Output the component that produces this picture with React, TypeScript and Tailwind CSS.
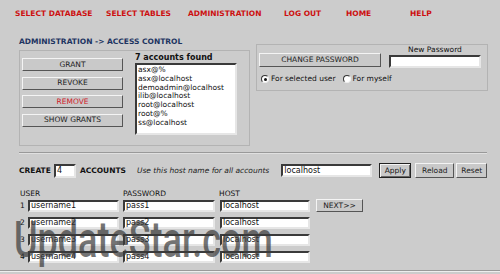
import React, { FC } from 'react';

const navItems = [
  { label: 'SELECT DATABASE', width: 'w-[91px]' },
  { label: 'SELECT TABLES', width: 'w-[82px]' },
  { label: 'ADMINISTRATION', width: 'w-[96px]' },
  { label: 'LOG OUT', width: 'w-[62px]' },
  { label: 'HOME', width: 'w-[64px]' },
  { label: 'HELP', width: 'w-[60px]' },
];

const accounts = [
  'asx@%',
  'asx@localhost',
  'demoadmin@localhost',
  'ilib@localhost',
  'root@localhost',
  'root@%',
  'ss@localhost',
];

const newAccounts = [
  { user: 'username1', pass: 'pass1', host: 'localhost' },
  { user: 'username2', pass: 'pass2', host: 'localhost' },
  { user: 'username3', pass: 'pass3', host: 'localhost' },
  { user: 'username4', pass: 'pass4', host: 'localhost' },
];

// old-school raised / sunken borders
const raised = 'border border-t-[#f4f4f4] border-l-[#f4f4f4] border-r-[#555] border-b-[#555] bg-[#c9c9c9]';
const sunken = 'border-2 border-t-[#3a3a3a] border-l-[#3a3a3a] border-r-[#e6e6e6] border-b-[#e6e6e6] bg-white';

const Button: FC<{ label: string; className?: string; red?: boolean }> = ({ label, className = '', red }) => (
  <div
    className={`${raised} flex items-center justify-center text-[7.5px] leading-none ${
      red ? 'text-[#d0202a]' : 'text-[#222]'
    } ${className}`}
  >
    {label}
  </div>
);

const Field: FC<{ value?: string; className?: string }> = ({ value = '', className = '' }) => (
  <div className={`${sunken} flex items-center pl-[1px] text-[8px] leading-none text-[#111] ${className}`}>{value}</div>
);

const Radio: FC<{ checked?: boolean }> = ({ checked }) => (
  <span className="flex h-[8px] w-[8px] items-center justify-center rounded-full border border-t-[#333] border-l-[#333] border-r-[#eee] border-b-[#eee] bg-white">
    {checked && <span className="h-[3px] w-[3px] rounded-full bg-[#111]" />}
  </span>
);

const App: FC = () => {
  return (
    <div
      className="relative h-[274px] w-[500px] overflow-hidden bg-[#cccccc] text-[#222]"
      style={{ fontFamily: '"DejaVu Sans", Verdana, sans-serif' }}
    >
      {/* top menu */}
      <div className="flex pl-[15px] pt-[9px] text-[7.5px] font-bold leading-[9px] text-[#cc1010]">
        {navItems.map((item) => (
          <div key={item.label} className={item.width}>
            {item.label}
          </div>
        ))}
      </div>

      <div className="ml-[19px] mt-[19px] text-[7.5px] font-bold leading-[9px] text-[#1d3461]">
        ADMINISTRATION -&gt; ACCESS CONTROL
      </div>

      {/* access control panels */}
      <div className="mt-[-2px] flex items-start gap-[6px] pl-[19px]">
        <div className="mt-[6px] flex h-[96px] w-[231px] border border-[#b3b3b3] pl-[2px] pt-[7px]">
          <div className="flex w-[101px] flex-col gap-[5.5px]">
            <Button label="GRANT" className="h-[13px]" />
            <Button label="REVOKE" className="h-[13px]" />
            <Button label="REMOVE" className="h-[13px]" red />
            <Button label="SHOW GRANTS" className="h-[13px]" />
          </div>
          <div className="ml-[12px] mt-[-5px] flex flex-col">
            <div className="text-[8px] font-bold leading-[9px] text-[#111]">7 accounts found</div>
            <div className="mt-[1px] h-[72px] w-[102px] border-2 border-t-[#3a3a3a] border-l-[#3a3a3a] border-r-[#e6e6e6] border-b-[#e6e6e6] bg-white pl-[1px] pt-[1px]">
              {accounts.map((a) => (
                <div key={a} className="text-[7.5px] leading-[8.8px] text-[#111]">
                  {a}
                </div>
              ))}
            </div>
          </div>
        </div>

        <div className="flex h-[47px] w-[232px] flex-col border border-[#b3b3b3] px-[2px]">
          <div className="flex items-end">
            <Button label="CHANGE PASSWORD" className="mb-[1px] h-[14px] w-[122px]" />
            <div className="ml-[8px] flex flex-col items-center">
              <div className="text-[7.5px] leading-[10px] text-[#111]">New Password</div>
              <Field className="h-[13px] w-[92px]" />
            </div>
          </div>
          <div className="mt-[7px] flex items-center pl-[2px] text-[7.5px] leading-none text-[#111]">
            <Radio checked />
            <span className="ml-[2px]">For selected user</span>
            <span className="ml-[7px]">
              <Radio />
            </span>
            <span className="ml-[2px]">For myself</span>
          </div>
        </div>
      </div>

      <div className="ml-[19px] mt-[6px] h-[2px] w-[468px] border-t border-b border-t-[#999] border-b-[#e0e0e0]" />

      {/* create accounts */}
      <div className="mt-[9px] flex items-center pl-[19px] text-[7.5px] leading-none">
        <span className="font-bold text-[#111]">CREATE</span>
        <Field value="4" className="ml-[3px] h-[14px] w-[22px]" />
        <span className="ml-[4px] font-bold text-[#111]">ACCOUNTS</span>
        <span className="ml-[11px] italic text-[#222]">Use this host name for all accounts</span>
        <Field value="localhost" className="ml-[12px] h-[13px] w-[91px]" />
        <div className="ml-[7px] flex h-[15px] w-[32px] items-center justify-center border border-[#222] bg-[#c9c9c9] text-[7.5px] text-[#111] shadow-[inset_1px_1px_0_#f4f4f4,inset_-1px_-1px_0_#666]">
          Apply
        </div>
        <Button label="Reload" className="ml-[4px] h-[15px] w-[39px]" />
        <Button label="Reset" className="ml-[2px] h-[15px] w-[31px]" />
      </div>

      <div className="mt-[11px] flex pl-[20px] text-[7.5px] leading-[9px] text-[#111]">
        <span className="w-[103px]">USER</span>
        <span className="w-[96px]">PASSWORD</span>
        <span>HOST</span>
      </div>

      <div className="mt-[1px] flex flex-col gap-[5px] pl-[20px]">
        {newAccounts.map((row, i) => (
          <div key={row.user} className="flex items-center">
            <span className="w-[8px] text-[7.5px] leading-none text-[#111]">{i + 1}</span>
            <Field value={row.user} className="h-[12px] w-[91px]" />
            <Field value={row.pass} className="ml-[4px] h-[12px] w-[92px]" />
            <Field value={row.host} className="ml-[5px] h-[12px] w-[90px]" />
            {i === 0 && <Button label="NEXT>>" className="ml-[6px] h-[13px] w-[47px]" />}
          </div>
        ))}
      </div>

      <div className="absolute bottom-[2px] left-0 h-[2px] w-full border-t border-b border-t-[#9a9a9a] border-b-[#eeeeee]" />

      {/* watermark over the form */}
      <div
        className="pointer-events-none absolute left-[14px] top-[215px] origin-left scale-x-[0.72] whitespace-nowrap text-[50px] font-medium leading-none text-[#3a3a3a] opacity-70"
        style={{ fontFamily: 'Roboto, "Liberation Sans", sans-serif' }}
      >
        UpdateStar.com
      </div>
    </div>
  );
};

export default App;
